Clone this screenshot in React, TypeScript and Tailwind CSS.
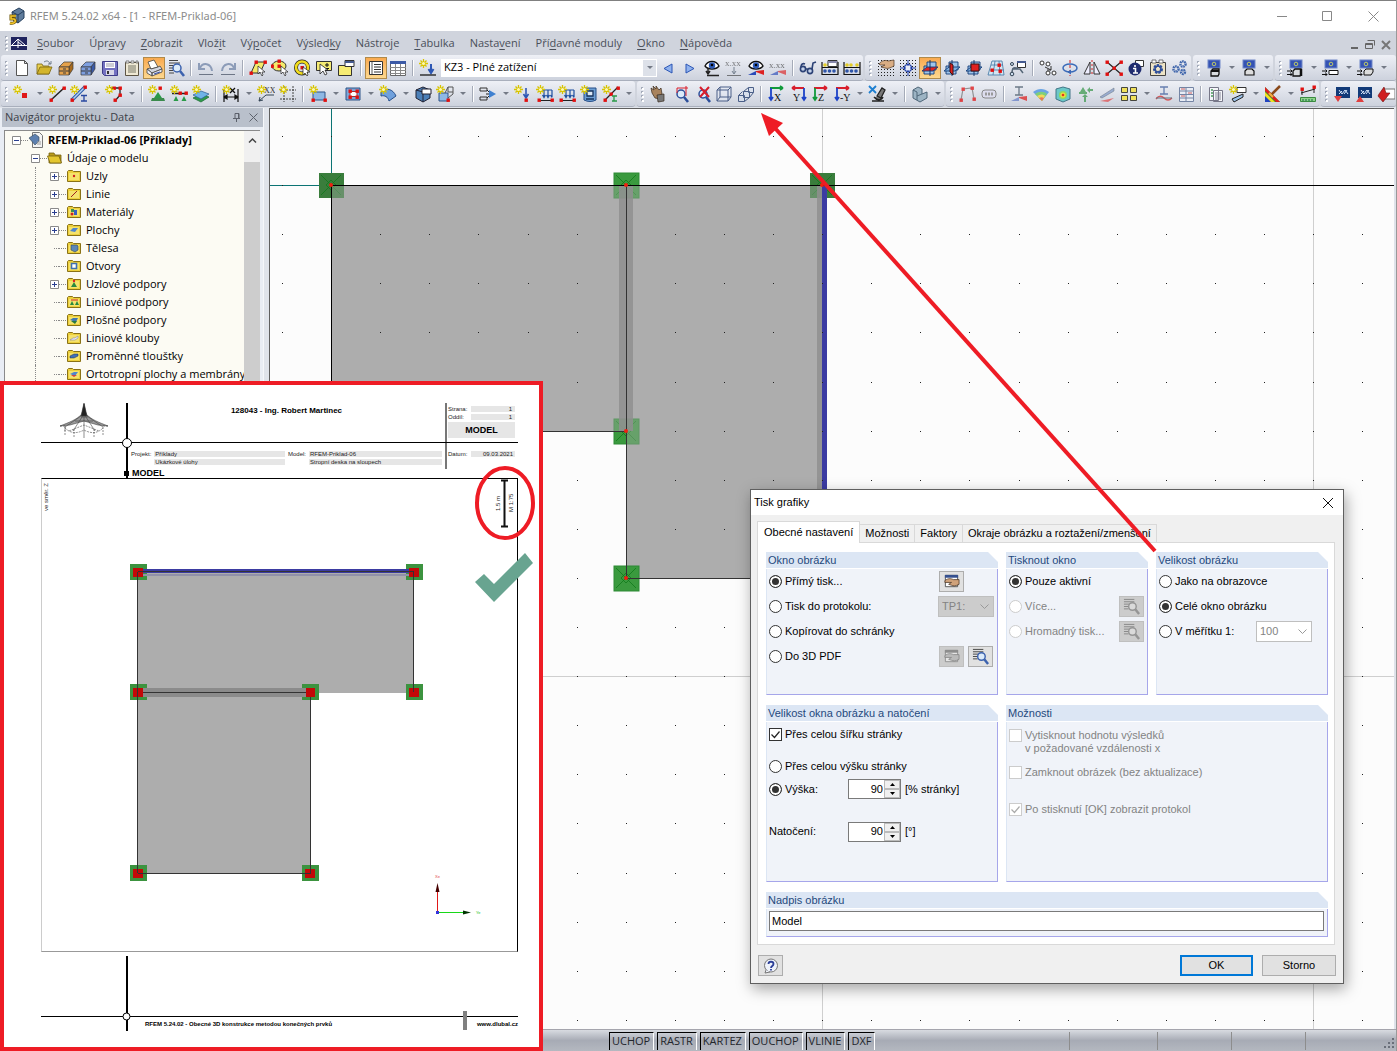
import type { ReactNode } from 'react'

const ui = "font-['Open_Sans',sans-serif] text-[11px]"
const dlg = "font-['Liberation_Sans',sans-serif] text-[11px]"

const star = (
  <g stroke="#d8c400" strokeWidth="1.300">
    <path d="M4.500 0v9M0 4.500h9M1.500 1.500l6 6M7.500 1.500l-6 6" />
    <circle cx="4.500" cy="4.500" r="1.500" fill="#fff9b0" stroke="none" />
  </g>
)

const node = (x: number, y: number) => <rect x={x - 1.5} y={y - 1.5} width="3.400" height="3.400" fill="#e01010" stroke="none" />

const cabinet = (front: string, side: string) => (
  <g stroke="#3a3a3a" strokeWidth=".7">
    <path d="M2 8l5-5h9l-4 5z" fill={front} />
    <path d="M12 8l4-5v7l-4 6z" fill={side} />
    <path d="M2 8h10v8H2z" fill={front} />
    <path d="M2 12h10M6 10h3M6 14h3" strokeWidth="1.200" />
  </g>
)

const magnifier = (color: string) => (
  <g fill="none" stroke={color}>
    <circle cx="10" cy="9" r="4" fill="#dcebfa" strokeWidth="1.500" />
    <path d="M13 12l4 5" strokeWidth="2.600" />
  </g>
)

const eye = (
  <g>
    <path d="M2 7c3-6 11-6 14 0-3 4-11 4-14 0z" fill="#fff" stroke="#111" strokeWidth="1.300" />
    <circle cx="9" cy="6.500" r="3.200" fill="#2d5bb8" />
    <circle cx="9" cy="6" r="1.300" fill="#000" />
  </g>
)

const wedge = <path d="M9 12l8-1v5l-8-3z" fill="#dd2222" />
const wedgeBlue = <path d="M1 16h8v-4z" fill="#2a4ab8" />

const loads = (
  <g fill="none" stroke="#1d4fa0" strokeWidth="1.200">
    <path d="M4 5h12M8 5v7M12 5v7M16 5v7M6.500 10L8 12.500 9.500 10M10.500 10l1.500 2.500 1.500-2.500M14.500 10l1.500 2.500" />
    <path d="M2 15.500h15" stroke="#222" />
    {node(3, 15)}
    {node(16, 15)}
    {star}
  </g>
)

const plane = (a: string, b: string) => (
  <g stroke="#123c78" strokeWidth=".9">
    <path d="M3 7h10v8H3z" fill="#9ec4ea" />
    <path d="M6 3h9v8H6z" fill={a} />
    <path d="M1 12l5-4h11l-5 4z" fill={b} />
    <path d="M9 1v16" stroke="#0a2a60" />
  </g>
)

const axes = (label: string, flip = false) => (
  <g>
    <path d={flip ? 'M15 3H3M3 3l3-2M3 3l3 2' : 'M3 3h13M16 3l-3-2M16 3l-3 2'} stroke={label === 'X' ? '#119a3a' : '#d81e2c'} strokeWidth="1.800" />
    <path d={flip ? 'M15 3v12M13 12l2 3 2-3' : 'M4 3v12M2 12l2 3 2-3'} stroke={label === 'Z' ? '#119a3a' : '#1c42c8'} strokeWidth="1.800" />
    <text x={flip ? 4 : 7} y="16" fontSize="10" fontFamily="Liberation Serif" fill="#111">{label}</text>
  </g>
)

const monitor = (
  <g>
    <rect x="3" y="1" width="12" height="8" fill="#3553b4" stroke="#7088c8" />
    <circle cx="9" cy="5" r="1.800" fill="none" stroke="#cbd560" strokeWidth=".9" />
  </g>
)

const box = <path d="M6 12l2-2h6v5l-1 2H6z" fill="#d9dcdf" stroke="#111" strokeWidth="1.300" />
const arrows = <path d="M0 12h5M3.500 10.500l1.500 1.500-1.500 1.500M0 15.500h5M3.500 14l1.500 1.500L3.500 17" stroke="#111" fill="none" />

const dotGrid = (
  <g fill="#222">
    {[2, 5, 8, 11, 14, 17].map(x => [2, 5, 8, 11, 14, 17].map(y => <rect key={`${x}-${y}`} x={x - 1} y={y - 1} width="1" height="1" />))}
  </g>
)

const abacus = (
  <g>
    <path d="M1 3v13M17 3v13M1 15.500h16M1 8.500h16" stroke="#111" strokeWidth="1.200" />
    <g fill="#2f55a8"><circle cx="4" cy="12" r="1.800" /><circle cx="8.500" cy="12" r="1.800" /><circle cx="13" cy="12" r="1.800" /></g>
    <g fill="#e2cc28"><circle cx="4" cy="6" r="1.800" /><circle cx="8" cy="6" r="1.800" /><circle cx="14" cy="6" r="1.800" /></g>
  </g>
)

const screen = (
  <g>
    <path d="M3 2h14v11H3z" fill="#123a78" />
    <path d="M6 5l3 4 3-4 3 4M6 9l3-3M11 9l3-4" stroke="#d5e5fa" />
  </g>
)

const icons: Record<string, ReactNode> = {
  new: <path d="M3.500 1.500h8l3 3v12h-11zM11.500 1.500v3h3" fill="#fff" stroke="#555" />,
  open: <g stroke="#7a6510" strokeWidth=".8"><path d="M2 15V5h5l1 2h6v8z" fill="#e8cf50" /><path d="M2 15l3-7h12l-3 7z" fill="#d3b52c" /><path d="M9 3c3-2 5-1 6 2M16 2v3h-3" fill="none" stroke="#567" /></g>,
  cabinetModel: cabinet('#e5a24c', '#a86a1c'),
  cabinetProject: cabinet('#7d9fe0', '#3a5aa8'),
  save: <g><path d="M1.500 2.500h15v14h-13l-2-2z" fill="#7371c0" stroke="#3f3d88" /><path d="M4 3h10v6H4z" fill="#fff" /><path d="M5 5h8M5 7h8" stroke="#99a" /><path d="M5 11h8v5H5z" fill="#d8d8e8" /><path d="M6 12h2v3H6z" fill="#333" /></g>,
  notes: <g><path d="M2.500 3.500h13v13h-13z" fill="#efe9d4" stroke="#5d5544" /><path d="M5 7h8M5 9h8M5 11h8M5 13h8" stroke="#776" /><path d="M3 2h3v2H3zM8 2h3v2H8zM13 2h2v2h-2z" fill="#fff" stroke="#555" strokeWidth=".7" /></g>,
  print: <g stroke="#444" strokeWidth=".8"><path d="M3 3l6-2 4 7-7 2z" fill="#fff" /><path d="M2 10l3-1 1 1 7-2 2-1 2 3-10 4z" fill="#d2d5e0" /><path d="M2 10l5 4v3l-5-3zM7 14l10-4v3L7 17z" fill="#eceef6" /><path d="M9 15l6-2" stroke="#4458a8" strokeWidth="1.200" /></g>,
  preview: <g><path d="M2 1.500h9M2 4h11M2 6.500h5M2 9h4M2 11.500h4M2 14h5" stroke="#444" />{magnifier('#3c62ae')}</g>,
  undo: <g fill="none" stroke="#8c9cb8"><path d="M3 9c3-6 11-5 12 3M2 4v6h6" strokeWidth="2" /><path d="M2 15.500h14" stroke="#6d7686" /></g>,
  redo: <g fill="none" stroke="#8c9cb8"><path d="M15 9C12 3 4 4 3 12M16 4v6h-6" strokeWidth="2" /><path d="M2 15.500h14" stroke="#6d7686" /></g>,
  selectRect: <g><path d="M2 14l5-11h9l-5 11z" fill="#f5ea6a" stroke="#333" />{node(2, 14)}{node(7, 3)}{node(16, 3)}<path d="M9 7v8l2-2 2 4 1-1-1-3h3z" fill="#fff" stroke="#222" strokeWidth=".7" /></g>,
  selectEllipse: <g><ellipse cx="8" cy="7" rx="7" ry="5" fill="#f5ea6a" stroke="#333" />{node(8, 2)}{node(8, 7)}{node(1, 7)}<path d="M10 7v8l2-2 2 4 1-1-1-3h3z" fill="#fff" stroke="#222" strokeWidth=".7" /></g>,
  selectRing: <g fill="none"><circle cx="9" cy="8.500" r="6" stroke="#222" strokeWidth="4" /><circle cx="9" cy="8.500" r="6" stroke="#f1dc1c" strokeWidth="2.600" />{node(9, 8.5)}<path d="M10 8v8l2-2 2 3 1-1-1-3h3z" fill="#fff" stroke="#222" strokeWidth=".7" /></g>,
  selectAdd: <g><path d="M1.500 2.500h15v9h-15z" fill="#f6ec74" stroke="#333" /><path d="M12 4v4M10 6h4M10 9.500h4" stroke="#111" /><path d="M5 5v10l3-3 2 4 2-1-2-4h3z" fill="#fff" stroke="#222" strokeWidth=".8" /></g>,
  visibility: <g><path d="M1.500 6.500h13v10h-13z" fill="#f6ec74" stroke="#333" /><path d="M8 1.500h9v6H8z" fill="#fff" stroke="#333" /><path d="M8 2h9v2H8z" fill="#445a90" /></g>,
  navigator: <g><path d="M2.500 2.500h13v13h-13z" fill="#fff" stroke="#333" /><path d="M5 3v12" stroke="#555" /><path d="M7 5.500h7M7 8h7M7 10.500h7M7 13h7" stroke="#333" /></g>,
  table: <g><path d="M1.500 2.500h15v14h-15z" fill="#fff" stroke="#666" /><path d="M1 2h16v3H1z" fill="#3c5aa6" /><path d="M1 8.500h16M1 11.500h16M1 14.500h16M6.500 5v11M11.500 5v11" stroke="#888" /></g>,
  newLoad: <g>{star}<path d="M12 5v8M9.500 10l2.500 4 2.500-4" stroke="#2d57b4" strokeWidth="2" /><path d="M1 16h16" stroke="#333" strokeWidth="1.500" /></g>,
  prev: <path d="M13 5v9L5 9.500z" fill="#8fb2ee" stroke="#2b55b4" />,
  next: <path d="M5 5v9l8-4.500z" fill="#8fb2ee" stroke="#2b55b4" />,
  showLoads: <g>{eye}<path d="M5 9v5M3 12l2 3 2-3" stroke="#222" strokeWidth="1.500" /><path d="M4 16.500h12" stroke="#222" strokeWidth="1.500" /></g>,
  loadValues: <g opacity=".6"><text x="0" y="7" fontSize="9" fontFamily="Liberation Serif" fill="#333">x.xx</text><path d="M9 8v6M7 12l2 3 2-3" stroke="#345" /><path d="M2 16.500h14" stroke="#333" /></g>,
  showResults: <g>{eye}{wedge}{wedgeBlue}</g>,
  resultValues: <g opacity=".65"><text x="0" y="9" fontSize="9" fontFamily="Liberation Serif" fill="#333">x.xx</text>{wedge}{wedgeBlue}</g>,
  glasses: <g stroke="#2c4276" strokeWidth="1.600"><circle cx="4" cy="10" r="2.600" fill="#c4d2ea" /><circle cx="11" cy="12" r="2.600" fill="#c4d2ea" /><path d="M2 8c0-3 2-4 4-3M13 10l1-6 3-1M6.500 10h2" /></g>,
  abacusWindow: <g>{abacus}<path d="M7 1.500h9v6H7z" fill="#fff" stroke="#333" /><path d="M7 2h9v2H7z" fill="#88a" /></g>,
  abacus,
  gridHand: <g>{dotGrid}<path d="M2 5c3-4 7-4 9-3l6-1v6c-4 2-6 3-9 2L4 8l4-2H3z" fill="#d9ad84" stroke="#4b3524" strokeWidth=".7" /></g>,
  gridSnap: <g>{dotGrid}<circle cx="9" cy="9" r="3.500" fill="#e8ecf8" stroke="#1f3fa8" strokeWidth="1.200" /><path d="M9 1v6M9 11v6M1 9h6M11 9h6" stroke="#1f3fa8" /></g>,
  planeXY: plane('#9ec4ea', '#e02020'),
  planeYZ: <g>{plane('#9ec4ea', '#7fb0e0')}<path d="M7 4l3 2v10l-3-3z" fill="#e02020" stroke="#401010" /></g>,
  planeXZ: <g>{plane('#9ec4ea', '#7fb0e0')}<path d="M6 5h8v7H6z" fill="#e02020" stroke="#401010" /></g>,
  planeGrid: <g stroke="#4d80aa" strokeWidth=".9"><path d="M5 2h10l2 14H1z" fill="#d4e5f2" /><path d="M4 6h12M3 11h14M8 2L6 16M12 2l1 14" />{node(5, 11)}{node(12, 6)}{node(13, 12)}</g>,
  scheme: <g><path d="M8.500 2.500h8v6h-8z" fill="#fff" stroke="#333" /><path d="M8 2h9v2H8z" fill="#445a90" /><path d="M3 15c0-8 2-6 6-6M3 10h8l3 4" stroke="#567" strokeWidth="1.500" /><circle cx="3" cy="15" r="1.800" fill="#cde" stroke="#345" /><circle cx="3" cy="5" r="1.500" fill="#cde" stroke="#345" /></g>,
  move: <g fill="#fff" stroke="#333"><circle cx="3" cy="4" r="2" /><circle cx="9" cy="5" r="2" /><circle cx="9" cy="14" r="2" /><circle cx="15" cy="14" r="2" /><path d="M6 8l6 3M12 7v4H8" fill="none" /></g>,
  rotate: <g><ellipse cx="9" cy="9" rx="7" ry="4" stroke="#3a6ab8" strokeWidth="1.500" /><path d="M9 1v16" stroke="#d02020" strokeDasharray="3 2" /><path d="M10 11l-3 2 3 2" fill="#3a6ab8" stroke="#3a6ab8" /></g>,
  mirror: <g fill="#eef" stroke="#333"><path d="M7 3v12H1zM11 3v12h6z" /><path d="M9 1v16" stroke="#d02020" strokeDasharray="2 2" /></g>,
  crossNodes: <g><path d="M2 3l14 12M2 15L16 3" stroke="#222" strokeWidth="1.200" />{node(2, 3)}{node(16, 3)}{node(2, 15)}{node(16, 15)}{node(9, 9)}</g>,
  info: <g><path d="M8.500 1.500h8v6h-8z" fill="#fff" stroke="#333" /><circle cx="8" cy="10" r="6.500" fill="#1f2c70" /><path d="M8 6v2M6 9.500h2.500V14M6 14h5" stroke="#fff" strokeWidth="1.600" /></g>,
  settings: <g><path d="M1.500 3.500h15v13h-15z" fill="#eee4c6" stroke="#444" /><path d="M3 1h4v3H3zM10 1h4v3h-4z" fill="#fff" stroke="#444" strokeWidth=".7" /><circle cx="9" cy="10" r="3.500" stroke="#2f4f9a" strokeWidth="3" strokeDasharray="2 1" /><circle cx="9" cy="10" r="3" stroke="#2f4f9a" strokeWidth="1.500" /></g>,
  gears: <g stroke="#4066ac" strokeWidth="2.400"><circle cx="5" cy="10" r="2.600" strokeDasharray="1.600 .6" /><circle cx="12" cy="5" r="2.600" strokeDasharray="1.600 .6" /><circle cx="12" cy="13" r="2" strokeDasharray="1.600 .6" /></g>,
  viewA: <g>{monitor}{box}<path d="M6 12h8" stroke="#111" strokeWidth="2" /></g>,
  viewB: <g>{monitor}<path d="M5 12l2-2h5l2 2v4H5z" fill="#ddd" stroke="#111" strokeWidth="1.200" /></g>,
  viewC: <g>{monitor}{arrows}{box}<path d="M14 10v7" stroke="#111" strokeWidth="2.500" /></g>,
  viewD: <g>{monitor}{arrows}<path d="M7 11.500h9v4H7z" fill="#fff" stroke="#111" /></g>,
  viewE: <g>{monitor}{arrows}<path d="M7 16v-4l2-2h7v3l-2 3z" fill="#ddd" stroke="#111" /></g>,

  node: <g>{star}<rect x="9" y="8" width="5" height="5" fill="#e01818" /></g>,
  line: <g><path d="M3 15L16 3" stroke="#222" strokeWidth="1.500" />{node(3, 15)}{node(16, 3)}{star}</g>,
  member: <g><path d="M2 15L15 2" stroke="#2c5aa8" strokeWidth="3.500" /><path d="M2 15L15 2" stroke="#b5d2f2" strokeWidth="1.500" />{node(2, 15)}{node(15, 2)}{star}<path d="M11 10.500h6M14 10v6M11 16h6" stroke="#2848a0" strokeWidth="1.300" /></g>,
  polyline: <g><path d="M5 3h10v7l-5 6" stroke="#222" strokeWidth="1.300" />{node(15, 3)}{node(15, 10)}{node(10, 15)}{node(9, 3)}{star}</g>,
  support: <g><path d="M10 7l4 6H6z" fill="#2a9a48" /><path d="M4 13h12l1 3H3z" fill="#3a8a4c" />{node(12, 3)}{star}</g>,
  lineSupport: <g><path d="M2 8.500h14" stroke="#222" strokeWidth="1.300" />{node(10, 8)}{node(16, 8)}<path d="M6 11l2.500 5h-5zM14 11l2.500 5h-5z" fill="#2a9a48" />{star}</g>,
  surfSupport: <g><path d="M1 13l8-4 8 3-8 5z" fill="#2f9a4c" stroke="#1a6a30" strokeWidth=".7" /><path d="M1 10l8-4 8 3-8 5z" fill="#6fb3e8" stroke="#2a5a90" strokeWidth=".7" />{star}</g>,
  dimension: <g><path d="M2 4v13M16 4v13M2 12h14M2 12l3-2v4zM16 12l-3-2v4z" stroke="#111" strokeWidth="1.200" fill="#111" /><path d="M8 3l5 5M13 3L8 8" stroke="#111" strokeWidth="1.300" />{star}</g>,
  comment: <g><path d="M2 16l7-6h8M2 16l1-4M2 16l4-1" stroke="#345" /><text x="7" y="8" fontSize="8" fontFamily="Liberation Serif" fill="#333">XX</text>{star}</g>,
  guideline: <g><path d="M5 1v16M14 1v16M1 5h16M1 14h16" stroke="#444" strokeDasharray="2 1" />{star}</g>,
  surface: <g><path d="M4 7h12v8H4z" fill="#8fb8e4" stroke="#2e5488" />{node(4, 15)}{node(16, 15)}{star}</g>,
  opening: <g><path d="M2 3h14v12H2z" fill="#7da6d8" stroke="#2e5488" /><path d="M6 6.500h7v5H6z" fill="#fff" stroke="#a03030" />{node(6, 12)}{node(13, 12)}{node(6, 6)}{node(13, 6)}</g>,
  curved: <g><path d="M2 7c5-5 12-3 15 4l-7 5C9 12 6 10 2 11z" fill="#6fa0dc" stroke="#27508c" />{star}</g>,
  solid: <g stroke="#223"><path d="M2 5l7-3 7 3v8l-7 4-7-4z" fill="#4c80b8" /><path d="M2 5l7 2v10" /><path d="M8 4h9v5H8z" fill="#fff" /></g>,
  solidNew: <g><path d="M3 8h9v8H3z" fill="#8fb8e4" stroke="#2e5488" /><path d="M9 8l3-6h5v7l-5 4M12 2v5h5" stroke="#555" />{node(12, 15)}{star}</g>,
  release: <g><path d="M1 3h7v3H1zM1 12h7v3H1z" stroke="#333" /><path d="M7 9h4M8 5l4 4-4 4" stroke="#222" /><path d="M10 5l7 4-7 4z" fill="#3f80d0" /></g>,
  nodeLoad: <g><path d="M12 3v9M9.500 9l2.500 4 2.500-4" stroke="#2d57b4" strokeWidth="1.600" />{node(12, 15)}{star}</g>,
  memberLoad: loads,
  lineLoad: loads,
  surfLoad: <g><path d="M4 3h12v12c-4 2-8 2-12 0z" fill="#6d9fd4" stroke="#274f88" /><path d="M7 6h6v5H7zM6 14h8" stroke="#16345e" strokeWidth="1.300" fill="#dce9f6" />{star}</g>,
  imposed: <g><path d="M3 15L16 2" stroke="#222" strokeWidth="1.300" />{node(16, 3)}{node(9, 9)}{node(3, 15)}<path d="M12 11v5M10 16h5M10 11h5" stroke="#2a9a48" strokeWidth="1.300" />{star}</g>,
  pan: <g strokeWidth=".7" stroke="#3a2b1c"><path d="M2 3l3 2-1-4 3 3V1l3 4 2-2 1 6-2 5-5-1-3-5z" fill="#a8835e" /><path d="M8 10l7-1v7l-6 1z" fill="#777" /></g>,
  zoomWindow: <g>{magnifier('#2d4f9a')}<path d="M6 3h11M15 1v10M6 3v5" stroke="#d81e2c" /></g>,
  zoomCancel: <g>{magnifier('#2d4f9a')}<path d="M7 2l9 10M16 2L7 12" stroke="#d81e2c" strokeWidth="2" /></g>,
  isoView: <path d="M2 5l3-3h11v10l-3 4H2zM2 5h11v11M13 5l3-3M5 2v10h11M5 12l-3 4" fill="#e6ecf6" fillOpacity=".5" stroke="#4a5f88" />,
  multiView: <path d="M1.500 10.500h6v6h-6zM6.500 6.500h6v6h-6zM11.500 2.500h5v5h-5zM1.500 10.500l4-4M6.500 6.500l5-4M7.500 16.500l5-4M12.500 12.500l4-5" fill="#d4ddec" fillOpacity=".6" stroke="#4a5f88" />,
  axisX: axes('X'),
  axisY: axes('Y', true),
  axisZ: axes('Z'),
  axisMinusY: axes('-Y'),
  microscope: <g><path d="M4 16h12M9 11l5-8 3 2-4 8zM6 12c3 4 8 3 9 0" stroke="#222" strokeWidth="1.300" fill="#777" /><path d="M1 1l7 7M8 1L1 8" stroke="#1d7fd0" strokeWidth="1.800" /></g>,
  render: <path d="M2 5l5-3 4 2v5l5-2v6l-7 4-7-4zM2 5l4 2v8M11 9l-5 2" fill="#9db4c4" stroke="#4f6678" />,
  frame: <g opacity=".75"><path d="M3 15L5 4l9-1 2 11" stroke="#777" strokeWidth="1.200" />{node(3, 15)}{node(5, 4)}{node(14, 3)}{node(16, 14)}</g>,
  tag: <g><rect x="2" y="5" width="14" height="8" rx="3" fill="#dde" stroke="#888" /><path d="M5 9h8" stroke="#999" strokeWidth="3" strokeDasharray="2 1" /></g>,
  section: <g opacity=".75"><path d="M5 2h8M9 2v8M5 10h8" stroke="#456" strokeWidth="1.300" />{wedge}<path d="M1 16h8v-4z" fill="#6a82c8" /></g>,
  rainbow: <g><path d="M1 7c5-4 11-4 16 0l-7 9z" fill="#6aa4e4" /><path d="M3 9c4-3 9-3 12 0l-5 7z" fill="#7fcf7a" /><path d="M5 11c3-2 6-2 8 0l-3 5z" fill="#f0d958" /><path d="M7 13c2-1 3-1 5 0l-2 3z" fill="#e8785a" /></g>,
  cube: <g><path d="M2 4l7-2 7 2v10l-7 3-7-3z" fill="#6bc8c8" stroke="#478" /><circle cx="9" cy="10" r="4" fill="#8edc5a" /><circle cx="9" cy="10" r="2.600" fill="#f2dd3c" /><circle cx="9" cy="10" r="1.300" fill="#e03a20" /></g>,
  reactions: <g opacity=".75" fill="#3f9a50"><path d="M4 7l3-5 3 5zM3 7h8v2H3zM6 12l3-3 3 3h-2v5H8v-5zM11 5l3-3v2h3v2h-3v2z" /></g>,
  stress: <g opacity=".7"><path d="M2 12L16 3v3L4 13z" fill="#7d96c8" stroke="#456" strokeWidth=".6" /><path d="M2 16l14-3-6 4z" fill="#e04848" /></g>,
  panels: <g fill="#f0e05a" stroke="#333" strokeWidth=".9"><path d="M1.500 2.500h6v5h-6zM10.500 2.500h6v5h-6zM1.500 10.500h6v5h-6zM10.500 10.500h6v5h-6z" /></g>,
  diagram: <g opacity=".8"><path d="M5 2h8M9 2v7M5 9h8" stroke="#4866a0" strokeWidth="1.300" /><path d="M1 14c3-4 6-3 8-1s5 3 8 0" stroke="#d83838" strokeWidth="1.300" /><path d="M1 13h16" stroke="#456" /></g>,
  resultTable: <g><path d="M2.500 2.500h14v14h-14z" fill="#e9edf5" stroke="#7484a4" /><path d="M2 6h14M2 9.500h14M2 13h14M9 2v14" stroke="#7484a4" /><path d="M4 4h4M11 8h4M4 11h4" stroke="#d06060" /></g>,
  report: <g><path d="M2.500 2.500h9v13h-9zM6.500 5.500h9v11h-9z" fill="#f5f6fa" stroke="#778" /><path d="M4 5h2M4 8h2M4 11h2" stroke="#4a9a5a" strokeWidth="1.500" /><path d="M8 8h6M8 10h6M8 12h6M8 14h6" stroke="#889" /></g>,
  newSection: <g><path d="M8 2.500h9v5H8z" fill="#fff" stroke="#333" /><path d="M3 14l11-5v3l-9 5z" fill="#9cc2ea" stroke="#222" />{star}</g>,
  colors: <g><path d="M1 2v15h15z" fill="#1c9a30" /><path d="M1 7l10 10H1z" fill="#f2e020" /><path d="M1 11l6 6H1z" fill="#2244c0" /><path d="M1 2l15 15h-4L1 6z" fill="#e02020" /><path d="M7 10l9-9" stroke="#8a4a1c" strokeWidth="2.500" /><path d="M5 8l4 4" stroke="#f0b040" strokeWidth="2" /></g>,
  ruler: <g><path d="M2 8l14-4M3 4v6M15 2v6" stroke="#222" />{node(3, 4)}{node(15, 2)}<path d="M1.500 12.500h15v4h-15z" fill="#8fd48a" stroke="#3a8a40" /><path d="M4 14v2M7 14v2M10 14v2M13 14v2" stroke="#164" /></g>,
  screenA: <g>{screen}<path d="M1 11h8l-4 6z" fill="#e04040" /></g>,
  screenB: <g>{screen}<path d="M1 17h8l-4-6z" fill="#e04040" /></g>,
  screenC: <g><path d="M6 4h12v10H6z" fill="#fff" stroke="#777" /><path d="M2 9l5-7 2 6h4l-7 9-5-6z" fill="#d02020" stroke="#701010" strokeWidth=".6" /></g>,
}

// '|' is a separator, 'v' a split-button arrow, a leading '*' marks a pressed button
const rowOne = [
  'new open cabinetModel cabinetProject save notes *print preview | undo redo | selectRect selectEllipse selectRing selectAdd visibility | *navigator table | newLoad combo prev next showLoads loadValues showResults resultValues | glasses abacusWindow abacus',
  'gridHand gridSnap *planeXY planeYZ planeXZ planeGrid scheme | move rotate mirror crossNodes info settings gears',
  'viewA v viewB v',
  'viewC v viewD v viewE v',
]
const rowTwo = [
  'node v line member v polyline v | support lineSupport surfSupport | dimension v comment guideline | surface v opening v curved v solid solidNew v | release v nodeLoad memberLoad lineLoad surfLoad imposed v',
  'pan zoomWindow zoomCancel isoView multiView | axisX axisY axisZ axisMinusY v microscope v | render v',
  'frame tag | section rainbow cube reactions stress panels v diagram resultTable | report newSection v colors v ruler',
  'screenA screenB screenC',
]

function Grip() {
  return (
    <svg className="h-[18px] w-[10px] shrink-0" fill="#fff">
      {[2, 6, 10, 14].map(y => (
        <g key={y}>
          <rect x="4" y={y} width="2" height="2" fill="#a4abb9" />
          <rect x="5" y={y + 1} width="2" height="2" />
        </g>
      ))}
    </svg>
  )
}

function ToolItem({ id }: { id: string }) {
  if (id === '|') return <span className="mx-[3px] h-4 w-[2px] shrink-0 border-l border-[#a5abb8] bg-white" />
  if (id === 'v')
    return (
      <button aria-label="více" className="flex w-[13px] shrink-0 justify-center">
        <svg className="size-[7px]" fill="#747a86"><path d="M1 2h6L4 5z" /></svg>
      </button>
    )
  if (id === 'combo')
    return (
      <div className="ml-[2px] flex h-[18px] w-[216px] shrink-0 items-center bg-white pr-px">
        <select aria-label="Zatěžovací stav" className="h-full min-w-0 flex-1 appearance-none bg-white pl-[3px] text-black outline-none">
          <option>KZ3 - Plné zatížení</option>
        </select>
        <span className="flex h-4 w-[13px] items-center justify-center bg-[#dde1e9]">
          <svg className="size-[7px]" fill="#747a86"><path d="M1 2h6L4 5z" /></svg>
        </span>
      </div>
    )
  const pressed = id.startsWith('*')
  const name = pressed ? id.slice(1) : id
  return (
    <button
      aria-label={name}
      className={`flex h-[22px] w-[22px] shrink-0 items-center justify-center ${pressed ? 'border border-[#b08a4a] bg-gradient-to-b from-[#f9a94e] to-[#fdd88e]' : ''}`}
    >
      <svg viewBox="0 0 18 18" className="size-[18px] shrink-0" fill="none">{icons[name]}</svg>
    </button>
  )
}

function ToolRow({ groups }: { groups: string[] }) {
  return (
    <div className="flex h-[26px] gap-[2px] overflow-hidden pl-px">
      {groups.map((g, i) => (
        <div
          key={i}
          className={`flex items-center overflow-hidden rounded-[3px] border-b border-[#a9afbc] bg-gradient-to-b from-[#eef0f6] to-[#cdd2dd] ${i === groups.length - 1 ? 'min-w-0 flex-1' : 'shrink-0'}`}
        >
          <Grip />
          {g.split(' ').map((id, k) => <ToolItem key={k} id={id} />)}
        </div>
      ))}
    </div>
  )
}

const menu = [
  ['', 'S', 'oubor'], ['Úpr', 'a', 'vy'], ['', 'Z', 'obrazit'], ['Vlož', 'i', 't'], ['Vý', 'p', 'očet'], ['Výsled', 'k', 'y'],
  ['Nástro', 'j', 'e'], ['', 'T', 'abulka'], ['Nasta', 'v', 'ení'], ['Pří', 'd', 'avné moduly'], ['', 'O', 'kno'], ['', 'N', 'ápověda'],
]

function Logo() {
  return (
    <svg viewBox="0 0 18 18" className="size-[18px]">
      <path d="M4 5l7-4 5 3v7l-6 5-5-3z" fill="#5f7c9c" stroke="#26405e" />
      <path d="M4 5l6 3 6-4M10 8v8" fill="none" stroke="#26405e" />
      <path d="M8 9H3v3h3q2 1 1 3-2 2-5 1" fill="none" stroke="#6b5200" strokeWidth="3" />
      <path d="M8 9H3v3h3q2 1 1 3-2 2-5 1" fill="none" stroke="#f2c52a" strokeWidth="1.600" />
    </svg>
  )
}

function TitleBar() {
  return (
    <header className="flex h-[31px] items-center border-t border-[#808080] bg-white pl-2 text-[#8c8c8c]">
      <Logo />
      <h1 className="flex-1 pl-1 font-['Noto_Sans',sans-serif]">RFEM 5.24.02 x64 - [1 - RFEM-Priklad-06]</h1>
      <div className="flex">
        <button aria-label="Minimalizovat" className="flex w-[46px] justify-center"><svg className="size-[11px]" stroke="#888"><path d="M0 5.500h10" /></svg></button>
        <button aria-label="Maximalizovat" className="flex w-[45px] justify-center"><svg className="size-[11px]" stroke="#888" fill="none"><path d="M.5.5h9v9h-9z" /></svg></button>
        <button aria-label="Zavřít" className="flex w-[46px] justify-center"><svg className="size-[11px]" stroke="#888"><path d="M.5.5l10 10M10.500.5l-10 10" /></svg></button>
      </div>
    </header>
  )
}

function MenuBar() {
  return (
    <nav className="flex h-6 items-center pl-px text-[#4a4f59]">
      <Grip />
      <svg viewBox="0 0 16 13" className="h-[13px] w-4" fill="none" stroke="#fff">
        <path d="M0 0h16v13H0z" fill="#20245e" stroke="none" />
        <path d="M0 8.500h16M1 8l6-6M7 2v9M7 2l7 6M7 5l4 3" />
      </svg>
      <div className="flex flex-1 gap-[15px] pl-[10px]">
        {menu.map(([a, key, b]) => (
          <button key={a + key + b} className="whitespace-nowrap"><span>{a}</span><span className="underline underline-offset-2">{key}</span><span>{b}</span></button>
        ))}
      </div>
      <div className="flex items-end gap-[6px] pt-1 pr-[5px]">
        <button aria-label="Minimalizovat okno"><svg className="size-[10px]" stroke="#666" strokeWidth="2"><path d="M2 8h7" /></svg></button>
        <button aria-label="Obnovit okno"><svg className="size-[10px]" stroke="#666" fill="none"><path d="M2.500.5h7v5M.5 3.500h7v5h-7zM.5 4.500h7" /></svg></button>
        <button aria-label="Zavřít okno"><svg className="size-[10px]" stroke="#777" strokeWidth="2"><path d="M1 1l8 8M9 1L1 9" /></svg></button>
      </div>
    </nav>
  )
}

const tree: [string, boolean, ReactNode][] = [
  ['Uzly', true, <circle cx="7" cy="7" r="1.200" fill="#d02020" />],
  ['Linie', true, <path d="M4 10l6-6" stroke="#a02020" />],
  ['Materiály', true, <g><path d="M4 4h3v3H4z" fill="#3f8f4f" /><path d="M7 5h3v5H7z" fill="#3b5fc0" /><circle cx="5" cy="9" r="1.500" fill="#c22" /></g>],
  ['Plochy', true, <path d="M3 8l3-3h5l-3 4z" fill="#4f86cc" />],
  ['Tělesa', false, <path d="M4 4h6l1 1v4l-3 2-4-2z" fill="#5b87b8" stroke="#345" strokeWidth=".6" />],
  ['Otvory', false, <path d="M4.500 4.500h5v5h-5z" fill="#fff" stroke="#4070b0" strokeWidth="1.600" />],
  ['Uzlové podpory', true, <g><path d="M7 5l3 5H4z" fill="#2a8a40" /><circle cx="7" cy="4" r="1.200" fill="#d22" /></g>],
  ['Liniové podpory', false, <g><path d="M4 5h7" stroke="#c22" /><path d="M5 6l2 4H3zM10 6l2 4H8z" fill="#2a8a40" /></g>],
  ['Plošné podpory', false, <g><path d="M3 7l3-2h5l-2 4z" fill="#3f78b0" /><path d="M4 8h6l-2 3z" fill="#2a7a40" /></g>],
  ['Liniové klouby', false, <path d="M3 9l3-2h2l3-2v2L8 9z" fill="#eef" stroke="#889" strokeWidth=".6" />],
  ['Proměnné tloušťky', false, <path d="M3 7l4-2h4v2L7 9H3z" fill="#3f6fb8" stroke="#234" strokeWidth=".5" />],
  ['Ortotropní plochy a membrány', false, <g><path d="M3 7l4-2h4L8 9z" fill="#4f86cc" /><path d="M4 8l3 2 3-2z" fill="#c44" /></g>],
]

function Expander({ open = false }: { open?: boolean }) {
  return (
    <svg className="size-[9px] shrink-0" fill="#fff" stroke="#8a8a8a">
      <path d="M.5.5h8v8h-8z" />
      <path d={open ? 'M2 4.500h5' : 'M2 4.500h5M4.500 2v5'} stroke="#2a3f90" />
    </svg>
  )
}

const dots = 'h-px shrink-0 border-t border-dotted border-[#888]'

function Navigator() {
  return (
    <aside className="flex w-[264px] shrink-0 flex-col border-r border-[#f5f7fa] bg-[#e9edf4] pl-[2px]">
      <div className="flex h-[19px] items-center bg-[#b9c0cb] pr-[5px] pl-[3px] text-[#3c4048]">
        <h2 className="flex-1">Navigátor projektu - Data</h2>
        <button aria-label="Připnout" className="mr-2"><svg className="size-[9px]" fill="none" stroke="#5c616b"><path d="M3 .5h4v5H3zM1 5.500h7M4.500 6v3M6.500 1v5" /></svg></button>
        <button aria-label="Zavřít panel"><svg className="size-[9px]" stroke="#5c616b"><path d="M.5.500l8 8M8.500.500l-8 8" /></svg></button>
      </div>
      <div className="mt-[3px] mr-[3px] ml-[2px] flex min-h-0 flex-1 border-t border-l border-[#8a8a8a] bg-[#fcfbf3] text-black">
        <ul className="min-w-0 flex-1 overflow-hidden whitespace-nowrap">
          <li className="flex h-[18px] items-center pl-[7px]">
            <Expander open />
            <span className={`${dots} w-[7px]`} />
            <svg viewBox="0 0 16 16" className="size-4 shrink-0">
              <path d="M4.500.5h7l3 3v12h-10z" fill="#f4f4f4" stroke="#777" />
              <path d="M1 6l6-4 4 3v4l-4 4z" fill="#5d80b0" stroke="#345" strokeWidth=".6" />
              <path d="M9 10h4M9 12h4" stroke="#999" />
            </svg>
            <span className="pl-[4px] font-bold">RFEM-Priklad-06 [Příklady]</span>
          </li>
          <li className="flex h-[18px] items-center pl-[26px]">
            <Expander open />
            <span className={`${dots} w-[7px]`} />
            <svg viewBox="0 0 16 14" className="h-[14px] w-4 shrink-0" stroke="#75600c" strokeWidth=".8">
              <path d="M2 12V2h5l1 2h6v8z" fill="#b99b1c" />
              <path d="M3 12L.5 5H12l2.500 7z" fill="#e3c62f" />
            </svg>
            <span className="pl-[4px]">Údaje o modelu</span>
          </li>
          {tree.map(([label, expandable, glyph]) => (
            <li key={label} className="ml-[30px] flex h-[18px] items-center border-l border-dotted border-[#888] pl-[14px]">
              {expandable ? <Expander /> : <span className={`${dots} ml-1 w-[5px]`} />}
              <span className={`${dots} w-[7px]`} />
              <svg viewBox="0 0 14 14" className="ml-px size-[14px] shrink-0">
                <path d="M.5 2.500l1-1h4l1 1h7v10H.5z" fill="#edd03c" stroke="#8a7216" />
                <path d="M2 4h10v7H2z" fill="#f5e26c" />
                {glyph}
              </svg>
              <span className="pl-[5px]">{label}</span>
            </li>
          ))}
        </ul>
        <div className="w-4 shrink-0 bg-[#cdcdcd]">
          <div className="flex h-[31px] justify-center bg-[#f0f0f0] pt-[5px]">
            <svg className="size-[9px]" fill="none" stroke="#444" strokeWidth="1.500"><path d="M1 6.500L4.500 3 8 6.500" /></svg>
          </div>
        </div>
      </div>
    </aside>
  )
}

const cols = Array.from({ length: 23 }, (_, i) => Math.round(12 + i * 49.1))
const rows = Array.from({ length: 19 }, (_, i) => Math.round(27 + i * 49.1))

function NodeSupport({ x, y, dark }: { x: number; y: number; dark?: boolean }) {
  return (
    <g>
      <rect x={x - 12} y={y - 12} width="25" height="25" fill={dark ? '#3a7d3c' : '#3a9a3e'} stroke={dark ? 'none' : '#2c8a34'} />
      <path d={`M${x - 5} ${y}l5-5 5 5-5 5zM${x - 10} ${y - 10}l20 20M${x + 10} ${y - 10}l-20 20`} fill="none" stroke="#0f7a1a" strokeWidth=".8" />
    </g>
  )
}

function ModelCanvas() {
  return (
    <main className="min-w-0 flex-1 border-t border-l border-[#5f5f5f] bg-[#fcfcfc]">
      <svg className="block h-full w-full">
        <path d="M552.500 0v1100M1043.500 0v1100M0 567.500h1400" stroke="#cfcfcf" />
        <path d="M61.500 0v76M0 76.500h61" stroke="#0c7474" />
        <path d="M61 76h492v393H356V322H61z" fill="#adadad" />
        <NodeSupport x={61} y={76} dark />
        <NodeSupport x={356} y={76} />
        <NodeSupport x={552} y={76} dark />
        <NodeSupport x={356} y={322} />
        <NodeSupport x={356} y={469} />
        <path d="M61 76h295v246H61zM356 76h197v380H356z" fill="#adadad" fillOpacity=".4" />
        <path d="M349 76h14v246h-14zM547 76h6v393h-6z" fill="#8f8f8f" fillOpacity=".85" />
        <path d="M552 76h5v393h-5z" fill="#3b3ba2" />
        <g fill="#222">
          {cols.map(x => rows.map(y => <rect key={`${x}-${y}`} x={x} y={y} width="1" height="1" />))}
        </g>
        <path d="M61.500 322V76.500H1130" stroke="#000" fill="none" />
        <path d="M61 322.500h295M356.500 76v393M356 469.500h196" stroke="#333" fill="none" />
        <g fill="#f02010">
          <circle cx="61" cy="76" r="2" />
          <circle cx="356" cy="76" r="2" />
          <circle cx="552" cy="76" r="2" />
          <circle cx="356" cy="322" r="2" />
          <circle cx="356" cy="469" r="2" />
        </g>
      </svg>
    </main>
  )
}

function StatusBar() {
  return (
    <footer className="flex h-[22px] items-center border-t border-[#a5a5ad] bg-gradient-to-b from-[#d8dbe1] via-[#a7abb5] to-[#b4b8c0] pl-[609px] text-[#23262c]">
      <div className="flex flex-1 gap-[3px]">
        {['UCHOP', 'RASTR', 'KARTEZ', 'OUCHOP', 'VLINIE', 'DXF'].map(s => (
          <button key={s} className="h-[18px] border-t border-r border-l border-t-black border-r-white border-l-black pr-[3px] pl-[2px] leading-4">{s}</button>
        ))}
      </div>
      <div className="flex h-[18px]">
        <span className="w-[88px] border-l border-[#8d8d8d]" />
        <span className="w-[74px] border-l border-[#8d8d8d]" />
        <span className="w-[74px] border-l border-[#8d8d8d]" />
        <span className="flex w-[91px] items-end justify-end border-l border-[#8d8d8d]">
          <svg className="size-3" fill="#6a6f7a"><path d="M8 0h2v2H8zM8 4h2v2H8zM4 4h2v2H4zM8 8h2v2H8zM4 8h2v2H4zM0 8h2v2H0z" /></svg>
        </span>
      </div>
    </footer>
  )
}

function Field({ label, values, className }: { label: string; values: string[]; className: string }) {
  return (
    <div className={`flex ${className}`}>
      <span className="shrink-0 pr-[3px]">{label}</span>
      <div className="flex flex-1 flex-col gap-[2px]">
        {values.map(v => <span key={v} className="bg-[#e6e6e6] pl-px">{v}</span>)}
      </div>
    </div>
  )
}

function PrintNode({ x, y }: { x: number; y: number }) {
  return (
    <g>
      <rect x={x - 8} y={y - 8} width="17" height="16" fill="#3c933f" />
      <rect x={x - 5} y={y - 4} width="10" height="9" fill="#c40808" />
    </g>
  )
}

function PrintPage() {
  return (
    <section className="absolute top-[381px] left-0 w-[543px] border-4 border-[#ee1c25] bg-white pt-[18px] pr-[21px] pl-[37px] font-['Liberation_Sans',sans-serif] text-[6px] leading-[6px] text-[#222]">
      <div className="relative flex h-10 border-b border-black">
        <div className="flex w-[85px] justify-center">
          <svg viewBox="0 0 50 36" className="h-[36px] w-[50px]" fill="none" stroke="#444" strokeWidth=".6">
            <path d="M25 1l2 10c6 6 12 8 22 12l-10-1-14-4-14 4-10 1c10-4 16-6 22-12z" fill="#999" />
            <path d="M25 1v34M23 11h5M22 14h7M16 18h18M25 11L14 28M25 11l11 17M25 11L6 24M25 11l19 13" />
            <path d="M1 23h5v9M49 23h-5v9M6 25q8 8 19 2 11 6 19-2M15 26v8M35 26v8M6 23v5M10 28l15-6 15 6" strokeDasharray="2 1" />
            <path d="M25 0l3 13h-6z" fill="#222" />
          </svg>
        </div>
        <h2 className="flex-1 border-l-2 border-black pt-[3px] text-center text-[8px] leading-[9px] font-bold text-black">128043 - Ing. Robert Martinec</h2>
        <div className="flex w-[73px] flex-col gap-[2px] border-l-2 border-[#777] pt-[3px] pl-px">
          <div className="flex pr-[3px]"><span className="w-[23px]">Strana:</span><span className="flex-1 bg-[#e6e6e6] pr-[3px] text-right">1</span></div>
          <div className="flex pr-[3px]"><span className="w-[23px]">Oddíl:</span><span className="flex-1 bg-[#e6e6e6] pr-[3px] text-right">1</span></div>
          <div className="mr-[3px] bg-[#e6e6e6] text-center text-[9px] leading-4 font-bold text-black">MODEL</div>
        </div>
        <svg className="absolute top-[34px] left-[80px] size-3" fill="#fff" stroke="#000"><circle cx="6" cy="6" r="4.500" /></svg>
      </div>
      <div className="flex h-[35px]">
        <div className="w-[85px]" />
        <div className="flex flex-1 flex-col border-l-2 border-black">
          <div className="flex gap-[3px] pt-2 pr-[3px] pl-[3px]">
            <Field label="Projekt:" values={['Příklady', 'Ukázkové úlohy']} className="flex-1" />
            <Field label="Model:" values={['RFEM-Priklad-06', 'Stropní deska na sloupech']} className="flex-1" />
          </div>
          <h3 className="relative mt-[4px] pl-[4px] text-[9px] leading-[9px] font-bold text-black">
            <span className="absolute top-[2px] -left-1 size-[5px] bg-black" />
            MODEL
          </h3>
        </div>
        <div className="h-[26px] w-[73px] border-l-2 border-[#777] pt-2 pl-px">
          <div className="flex pr-[3px]"><span className="w-[23px]">Datum:</span><span className="flex-1 bg-[#e6e6e6] pr-[2px] text-right">09.03.2021</span></div>
        </div>
      </div>
      <svg className="block h-[474px] w-full border border-t-black border-r-black border-b-[#999] border-l-[#ccc] fill-none">
        <path d="M96 93h276v121H96z" fill="#adadad" />
        <path d="M96 214h173v181H96z" fill="#adadad" />
        <PrintNode x={96} y={93} /><PrintNode x={372} y={93} />
        <PrintNode x={96} y={213} /><PrintNode x={268} y={213} /><PrintNode x={372} y={213} />
        <PrintNode x={96} y={394} /><PrintNode x={268} y={394} />
        <path d="M101 209h163v9H101z" fill="#8b8b8b" />
        <path d="M101 95h266v2H101z" fill="#9090a8" />
        <path d="M101 90h266v4H101z" fill="#3b3ba2" />
        <path d="M95.500 93v301M268.500 218v176M371.500 93v120M96 394.500h173M101 213.500h163M96 92.500h276" stroke="#333" />
        <path d="M462.500 2v45M459 1.500h7M459 47.500h7" stroke="#111" strokeWidth="2" />
        <g fill="#222" fontSize="6">
          <text transform="translate(458 32) rotate(-90)">1.5 m</text>
          <text transform="translate(471 33) rotate(-90)">M 1:75</text>
          <text transform="translate(6 32) rotate(-90)">ve směr. Z</text>
        </g>
        <path d="M395.500 434v-22" stroke="#e01818" /><path d="M395.500 404l2 9h-4z" fill="#400" />
        <path d="M395 433.500h26" stroke="#18d818" /><path d="M429 433.500l-8-2v4z" fill="#030" />
        <rect x="394" y="432" width="3" height="3" fill="#33d" />
        <text x="393" y="399" fontSize="4" fill="#e04040">Xe</text>
        <text x="434" y="435" fontSize="4" fill="#20c020">Ye</text>
      </svg>
      <div className="relative mt-1 flex h-[75px]">
        <div className="mb-[14px] w-[85px] border-b border-black" />
        <div className="flex flex-1 flex-col border-l-2 border-black">
          <div className="h-[61px] border-b border-black" />
          <div className="flex justify-between pt-1 pl-[17px] font-bold text-black">
            <span>RFEM 5.24.02 - Obecné 3D konstrukce metodou konečných prvků</span>
            <span>www.dlubal.cz</span>
          </div>
        </div>
        <span className="absolute top-[55px] left-[422px] h-[19px] w-1 bg-[#808080]" />
        <svg className="absolute top-[56px] left-[81px] size-[9px]" fill="#fff" stroke="#000"><circle cx="4.500" cy="4.500" r="3.500" /></svg>
      </div>
      <div className="h-4" />
    </section>
  )
}

function Group({ title, className = '', children }: { title: string; className?: string; children: ReactNode }) {
  return (
    <fieldset className={`flex min-w-0 flex-col ${className}`}>
      <h3 className="h-4 bg-[#dce6f4] pl-[2px] leading-4 text-[#1f497d] [clip-path:polygon(0_0,calc(100%_-_10px)_0,100%_10px,100%_100%,0_100%)]">{title}</h3>
      <div className="mt-px flex-1 border-r border-b border-l border-r-[#a6a6ea] border-b-[#a6a6ea] border-l-[#dce6f4] bg-[#f0f3f9] pl-[2px]">{children}</div>
    </fieldset>
  )
}

function Radio({ name, label, checked, disabled }: { name: string; label: string; checked?: boolean; disabled?: boolean }) {
  return (
    <label className={`flex flex-1 items-center gap-[3px] whitespace-nowrap ${disabled ? 'text-[#838383]' : ''}`}>
      <input
        type="radio"
        name={name}
        defaultChecked={checked}
        disabled={disabled}
        className="size-[13px] shrink-0 appearance-none rounded-full border border-[#333] bg-white checked:bg-[#333] checked:shadow-[inset_0_0_0_2px_#fff] disabled:border-[#ccc]"
      />
      {label}
    </label>
  )
}

function Check({ label, checked, disabled }: { label: ReactNode; checked?: boolean; disabled?: boolean }) {
  return (
    <label className={`flex items-start gap-[3px] leading-[13px] whitespace-nowrap ${disabled ? 'text-[#838383]' : ''}`}>
      <span className="grid shrink-0">
        <input type="checkbox" defaultChecked={checked} disabled={disabled} className="peer col-start-1 row-start-1 size-[13px] appearance-none border border-[#333] bg-white disabled:border-[#ccc]" />
        <svg className={`pointer-events-none invisible col-start-1 row-start-1 size-[13px] peer-checked:visible ${disabled ? 'stroke-[#aaa]' : 'stroke-[#222]'}`} fill="none" strokeWidth="1.200">
          <path d="M2.500 6.500l3 3 5-6" />
        </svg>
      </span>
      {label}
    </label>
  )
}

function IconButton({ kind, disabled }: { kind: 'hand' | 'search'; disabled?: boolean }) {
  return (
    <button
      aria-label={kind === 'hand' ? 'Nastavení tiskárny' : 'Náhled'}
      disabled={disabled}
      className="flex h-[21px] w-[25px] items-center justify-center border border-[#adadad] bg-[#e1e1e1] disabled:border-[#bfbfbf] disabled:bg-[#ccc]"
    >
      <svg viewBox="0 0 18 18" className={`size-[17px] ${disabled ? 'opacity-50 grayscale' : ''}`} fill="none">
        {kind === 'hand' ? (
          <g>
            <path d="M2.500 2.500h13v12h-13z" fill="#fff" stroke="#555" />
            <path d="M2 2h14v3H2z" fill="#35508f" />
            <path d="M2 8c4-3 7-2 9-1h6v5c-4 2-6 2-8 1l-3-1 3-2H2z" fill="#d0a27a" stroke="#4b3524" strokeWidth=".8" />
          </g>
        ) : (
          <g>
            <path d="M1 1.500h11M1 4h11M1 6.500h7M1 9h5M1 11.500h5" stroke="#444" />
            {magnifier('#3c62ae')}
          </g>
        )}
      </svg>
    </button>
  )
}

function Drop({ label, value, disabled, white }: { label: string; value: string; disabled?: boolean; white?: boolean }) {
  return (
    <div className={`grid h-[21px] w-[56px] items-center border border-[#bfbfbf] text-[#838383] ${white ? 'bg-white' : 'bg-[#ccc]'}`}>
      <select aria-label={label} disabled={disabled} className="col-start-1 row-start-1 h-full w-full appearance-none pl-[3px] opacity-100">
        <option>{value}</option>
      </select>
      <svg className="pointer-events-none col-start-1 row-start-1 mr-1 h-[5px] w-[9px] justify-self-end" fill="none" stroke="#999"><path d="M.5.500l4 4 4-4" /></svg>
    </div>
  )
}

function Spin({ id, value }: { id: string; value: string }) {
  return (
    <div className="flex h-5 w-[53px] border border-[#7a7a7a] bg-white">
      <input id={id} aria-label={id} defaultValue={value} className="min-w-0 flex-1 pr-px text-right outline-none" />
      <div className="flex w-4 flex-col bg-[#bbb]">
        <button aria-label="Zvýšit" className="flex flex-1 items-center justify-center border border-[#bbb] bg-[#f0f0f0]"><svg className="h-[3px] w-[5px]"><path d="M0 3h5L2.500 0z" /></svg></button>
        <button aria-label="Snížit" className="flex flex-1 items-center justify-center border border-[#bbb] bg-[#f0f0f0]"><svg className="h-[3px] w-[5px]"><path d="M0 0h5L2.500 3z" /></svg></button>
      </div>
    </div>
  )
}

const line = 'flex h-[25px] items-center'
const tab = 'h-[18px] border-t border-r border-[#d9d9d9] px-[5px] whitespace-nowrap'

function PrintDialog() {
  return (
    <section role="dialog" aria-label="Tisk grafiky" className={`${dlg} absolute top-[489px] left-[750px] w-[594px] border border-[#5f5f5f] bg-[#f0f0f0] text-black shadow-[2px_5px_14px_rgba(0,0,0,.35)]`}>
      <div className="flex h-[25px] items-center justify-between bg-white pr-[9px] pl-[3px]">
        <h2>Tisk grafiky</h2>
        <button aria-label="Zavřít dialog"><svg className="size-3" stroke="#111"><path d="M1 1l10 10M11 1L1 11" /></svg></button>
      </div>
      <div className="px-[6px] pt-[6px]">
        <div role="tablist" className="flex items-end">
          <button role="tab" aria-selected="true" className="-mb-px h-[22px] border-t border-r border-l border-[#d9d9d9] bg-white px-[6px] whitespace-nowrap">Obecné nastavení</button>
          <button role="tab" className={tab}>Možnosti</button>
          <button role="tab" className={tab}>Faktory</button>
          <button role="tab" className={tab}>Okraje obrázku a roztažení/zmenšení</button>
        </div>
        <div className="mr-[2px] flex flex-col gap-[10px] border border-[#d9d9d9] bg-white pt-[9px] pr-[6px] pb-[7px] pl-2">
          <div className="flex h-[143px] gap-2">
            <Group title="Okno obrázku" className="w-[232px]">
              <div className={`${line} pr-[33px]`}><Radio name="target" label="Přímý tisk..." checked /><IconButton kind="hand" /></div>
              <div className={`${line} pr-[3px]`}><Radio name="target" label="Tisk do protokolu:" /><Drop label="Protokol" value="TP1:" disabled /></div>
              <div className={line}><Radio name="target" label="Kopírovat do schránky" /></div>
              <div className={`${line} gap-1 pr-1`}><Radio name="target" label="Do 3D PDF" /><IconButton kind="hand" disabled /><IconButton kind="search" /></div>
            </Group>
            <Group title="Tisknout okno" className="w-[142px]">
              <div className={line}><Radio name="window" label="Pouze aktivní" checked /></div>
              <div className={`${line} pr-[3px]`}><Radio name="window" label="Více..." disabled /><IconButton kind="search" disabled /></div>
              <div className={`${line} pr-[3px]`}><Radio name="window" label="Hromadný tisk..." disabled /><IconButton kind="search" disabled /></div>
            </Group>
            <Group title="Velikost obrázku" className="flex-1">
              <div className={line}><Radio name="size" label="Jako na obrazovce" /></div>
              <div className={line}><Radio name="size" label="Celé okno obrázku" checked /></div>
              <div className={`${line} pr-[15px]`}><Radio name="size" label="V měřítku 1:" /><Drop label="Měřítko" value="100" disabled white /></div>
            </Group>
          </div>
          <div className="flex h-[177px] gap-2">
            <Group title="Velikost okna obrázku a natočení" className="w-[232px]">
              <div className={line}><Check label="Přes celou šířku stránky" checked /></div>
              <div className={`${line} mt-[7px]`}><Radio name="height" label="Přes celou výšku stránky" /></div>
              <div className="flex h-5 items-center">
                <div className="flex w-[79px]"><Radio name="height" label="Výška:" checked /></div>
                <Spin id="Výška" value="90" />
                <span className="pl-1">[% stránky]</span>
              </div>
              <div className={`${line} mt-5`}>
                <label htmlFor="Natočení" className="w-[79px]">Natočení:</label>
                <Spin id="Natočení" value="90" />
                <span className="pl-1">[°]</span>
              </div>
            </Group>
            <Group title="Možnosti" className="flex-1">
              <div className="flex flex-col gap-[11px] pt-[7px]">
                <Check label={<span>Vytisknout hodnotu výsledků<br />v požadované vzdálenosti x</span>} disabled />
                <Check label="Zamknout obrázek (bez aktualizace)" disabled />
                <div className="pt-[13px]"><Check label="Po stisknutí [OK] zobrazit protokol" checked disabled /></div>
              </div>
            </Group>
          </div>
          <Group title="Nadpis obrázku">
            <div className="pt-[2px] pr-[3px] pb-[5px]">
              <input aria-label="Nadpis obrázku" defaultValue="Model" className="block h-5 w-full border border-[#7a7a7a] bg-white px-[2px] outline-none" />
            </div>
          </Group>
        </div>
      </div>
      <div className="flex items-center gap-[9px] pt-[10px] pr-[7px] pb-[7px] pl-[7px]">
        <button aria-label="Nápověda" className="flex h-[21px] w-[25px] items-center justify-center border border-[#adadad] bg-[#e1e1e1]">
          <svg viewBox="0 0 16 16" className="size-4" fill="none">
            <circle cx="8" cy="7.500" r="6.500" fill="#eef2fa" stroke="#777" />
            <path d="M3 12l-1 3 5-1" fill="#eef2fa" stroke="#777" />
            <path d="M5.500 6c0-3 5-3 5 0 0 2-2.500 2-2.500 4M8 11v1.500" stroke="#2c3f98" strokeWidth="1.800" />
          </svg>
        </button>
        <button className="ml-auto h-[21px] w-[73px] border-2 border-[#0078d7] bg-[#e1e1e1]">OK</button>
        <button className="h-[21px] w-[74px] border border-[#adadad] bg-[#e1e1e1]">Storno</button>
      </div>
    </section>
  )
}

function Annotations() {
  return (
    <svg className="pointer-events-none absolute inset-0 h-full w-full" fill="none">
      <ellipse cx="505" cy="503" rx="28" ry="35" stroke="#ee1c25" strokeWidth="4" />
      <path d="M475 582l9-8 10 10 31-31 8 10-39 39z" fill="#68a490" />
      <path d="M1155 551L774 127" stroke="#ee1c25" strokeWidth="4" />
      <path d="M761 113l22 10-14 13z" fill="#ee1c25" />
    </svg>
  )
}

export default function App() {
  return (
    <div className={`${ui} relative flex h-screen min-h-[1051px] flex-col overflow-hidden border-r border-[#999] bg-[#d0d4dd]`}>
      <TitleBar />
      <MenuBar />
      <ToolRow groups={rowOne} />
      <ToolRow groups={rowTwo} />
      <div className="flex min-h-0 flex-1 gap-[5px] bg-[#dfe3ea] pt-px pr-[2px]">
        <Navigator />
        <ModelCanvas />
      </div>
      <StatusBar />
      <PrintPage />
      <PrintDialog />
      <Annotations />
    </div>
  )
}
